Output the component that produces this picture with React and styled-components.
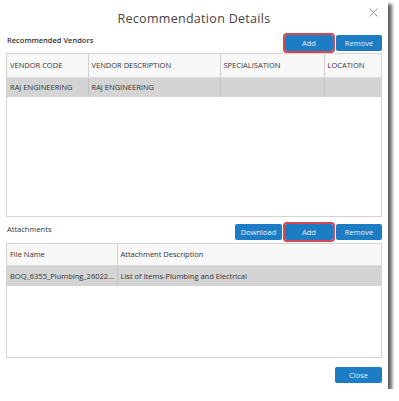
import React from "react";
import styled, { createGlobalStyle } from "styled-components";

const Global = createGlobalStyle`
  html, body { margin: 0; padding: 0; background: #fff; }
  body { font-family: "Open Sans", "Liberation Sans", sans-serif; color: #333; }
  * { box-sizing: border-box; }
`;

const Dialog = styled.div`
  position: relative;
  width: 388px;
  height: 389px;
  background: #fff;
  box-shadow: 4px 4px 3px rgba(0, 0, 0, 0.6);
  padding: 0 6px;
  display: flex;
  flex-direction: column;
`;

const Header = styled.div`
  height: 32px;
  display: flex;
  align-items: center;
  justify-content: center;
  padding-top: 4px;
`;

const Title = styled.h1`
  margin: 0;
  font-size: 12.5px;
  font-weight: 400;
  color: #444;
  letter-spacing: 0.3px;
`;

const CloseX = styled.button`
  position: absolute;
  top: 6px;
  right: 9px;
  width: 12px;
  height: 12px;
  padding: 0;
  border: 0;
  background: transparent;
  display: flex;
  align-items: center;
  justify-content: center;
`;

const SectionBar = styled.div`
  height: ${(p) => p.$h}px;
  display: flex;
  align-items: flex-end;
  justify-content: space-between;
  padding-bottom: ${(p) => p.$pb || 0}px;
`;

const Label = styled.span`
  font-size: 7.5px;
  font-weight: ${(p) => p.$weight || 400};
  color: #333;
  margin-left: 1px;
  margin-bottom: ${(p) => p.$mb}px;
`;

const Buttons = styled.div`
  display: flex;
  gap: 3px;
`;

const Btn = styled.button`
  height: 16px;
  width: ${(p) => p.$w}px;
  border: 0;
  border-radius: 2px;
  background: #1c7cc4;
  color: #e8f2fb;
  font-family: "Open Sans", "Liberation Sans", sans-serif;
  font-size: 7.5px;
  padding: 0;
  outline: ${(p) => (p.$highlight ? "2px solid #d9474e" : "none")};
  outline-offset: 0px;
`;

const TableBox = styled.div`
  height: ${(p) => p.$h}px;
  border: 1px solid #d4d4d4;
  overflow: hidden;
`;

const Table = styled.table`
  width: 100%;
  border-collapse: collapse;
  table-layout: fixed;
  font-size: 7.5px;
  color: #333;
`;

const Th = styled.th`
  width: ${(p) => (p.$w ? `${p.$w}px` : "auto")};
  height: ${(p) => p.$h}px;
  background: #f8f8f8;
  font-weight: 400;
  text-align: left;
  padding: 0 3px;
  border-right: 1px solid #d0d0d0;
  border-bottom: 1px solid #dcdcdc;
  &:last-child { border-right: 0; }
  white-space: nowrap;
`;

const Td = styled.td`
  height: ${(p) => p.$h}px;
  background: #d4d4d4;
  padding: 0 3px;
  border-right: 1px solid #c2c2c2;
  &:last-child { border-right: 0; }
  white-space: nowrap;
  overflow: hidden;
`;

const Footer = styled.div`
  flex: 1;
  display: flex;
  align-items: flex-end;
  justify-content: flex-end;
  padding-bottom: 6px;
`;

export default function App() {
  return (
    <>
      <Global />
      <Dialog>
        <Header>
          <Title>Recommendation Details</Title>
          <CloseX aria-label="close">
            <svg width="9" height="9" viewBox="0 0 9 9">
              <path d="M0.5 0.5 L8.5 8.5 M8.5 0.5 L0.5 8.5" stroke="#8a8a8a" strokeWidth="0.9" fill="none" />
            </svg>
          </CloseX>
        </Header>

        <SectionBar $h={21} $pb={2}>
          <Label $weight={600} $mb={6}>Recommended Vendors</Label>
          <Buttons>
            <Btn $w={48} $highlight>Add</Btn>
            <Btn $w={46}>Remove</Btn>
          </Buttons>
        </SectionBar>

        <TableBox $h={164}>
          <Table>
            <thead>
              <tr>
                <Th $w={81} $h={23}>VENDOR CODE</Th>
                <Th $w={132} $h={23}>VENDOR DESCRIPTION</Th>
                <Th $w={104} $h={23}>SPECIALISATION</Th>
                <Th $h={23}>LOCATION</Th>
              </tr>
            </thead>
            <tbody>
              <tr>
                <Td $h={20}>RAJ ENGINEERING</Td>
                <Td $h={20}>RAJ ENGINEERING</Td>
                <Td $h={20}></Td>
                <Td $h={20}></Td>
              </tr>
            </tbody>
          </Table>
        </TableBox>

        <SectionBar $h={26} $pb={3}>
          <Label $mb={6}>Attachments</Label>
          <Buttons>
            <Btn $w={47}>Download</Btn>
            <Btn $w={48} $highlight>Add</Btn>
            <Btn $w={46}>Remove</Btn>
          </Buttons>
        </SectionBar>

        <TableBox $h={115}>
          <Table>
            <thead>
              <tr>
                <Th $w={110} $h={21}>File Name</Th>
                <Th $h={21}>Attachment Description</Th>
              </tr>
            </thead>
            <tbody>
              <tr>
                <Td $h={21}>BOQ_6355_Plumbing_26022...</Td>
                <Td $h={21}>List of Items-Plumbing and Electrical</Td>
              </tr>
            </tbody>
          </Table>
        </TableBox>

        <Footer>
          <Btn $w={47}>Close</Btn>
        </Footer>
      </Dialog>
    </>
  );
}
